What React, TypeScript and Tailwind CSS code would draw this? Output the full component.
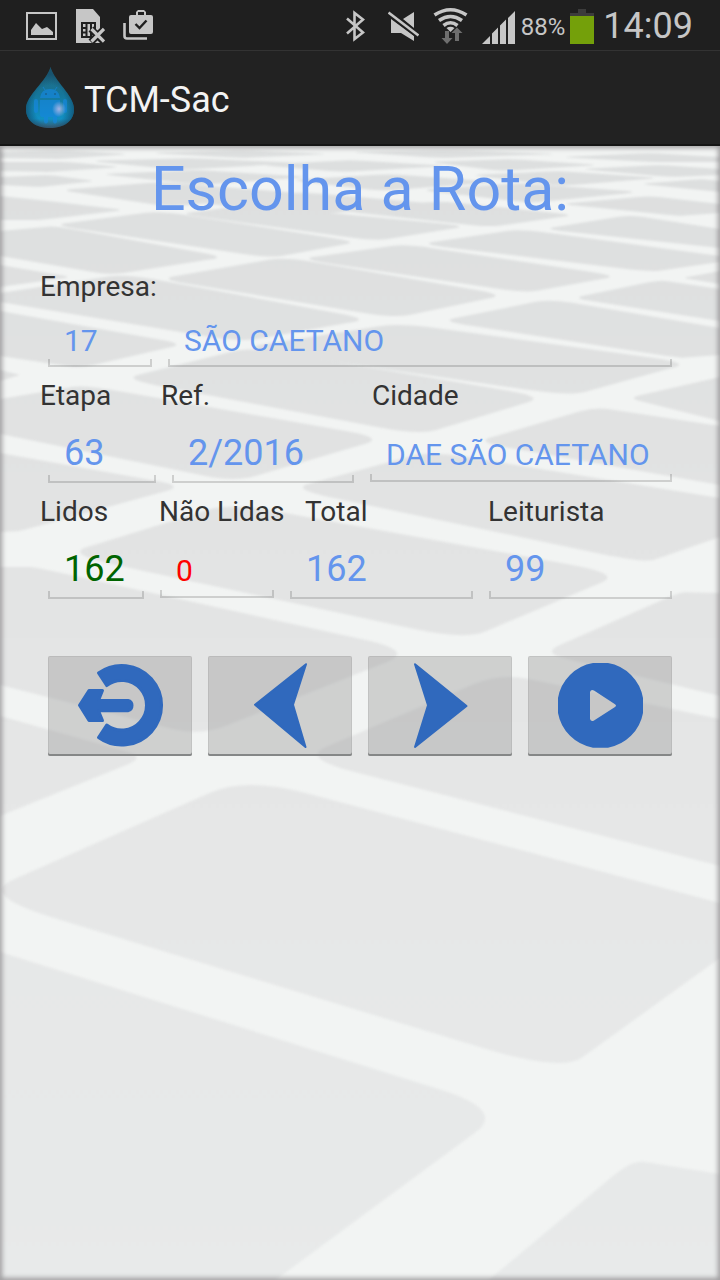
import { useState } from "react";
import type { ReactNode } from "react";

type Point = [number, number];

/* Paving slabs of the backdrop, listed from the horizon to the foreground. */
const SLABS: Point[][] = [
  [[0, 152], [60, 150], [130, 154], [60, 159], [0, 158]],
  [[150, 153], [240, 150], [330, 154], [240, 158]],
  [[350, 152], [450, 150], [560, 154], [440, 158]],
  [[560, 157], [650, 153], [720, 157], [720, 162], [650, 162]],
  [[0, 162], [70, 162], [120, 167], [50, 172], [0, 171]],
  [[90, 161], [190, 158], [300, 163], [180, 170]],
  [[260, 165], [350, 160], [450, 166], [340, 172]],
  [[430, 162], [510, 159], [600, 165], [500, 171]],
  [[580, 169], [660, 165], [720, 169], [720, 175], [670, 177]],
  [[0, 177], [50, 175], [95, 181], [40, 187], [0, 185]],
  [[100, 174], [200, 170], [310, 177], [200, 185]],
  [[290, 180], [390, 174], [500, 182], [380, 191]],
  [[470, 175], [560, 171], [660, 178], [560, 186]],
  [[640, 184], [700, 179], [720, 181], [720, 192]],
  [[60, 190], [160, 182], [300, 193], [170, 207]],
  [[180, 201], [300, 192], [440, 204], [310, 215]],
  [[420, 190], [520, 183], [640, 192], [530, 203]],
  [[560, 204], [650, 196], [720, 204], [720, 213], [680, 216]],
  [[340, 211], [440, 201], [575, 215], [490, 227]],
  [[0, 196], [40, 200], [125, 210], [40, 220], [0, 220]],
  [[180, 214], [245, 205], [468, 226], [376, 241]],
  [[543, 229], [630, 215], [720, 229], [720, 248]],
  [[0, 231], [55, 226], [226, 257], [110, 275], [0, 256]],
  [[52, 225], [160, 211], [358, 242], [270, 258]],
  [[300, 259], [405, 244], [618, 276], [525, 293]],
  [[420, 244], [520, 229], [720, 256], [720, 262], [650, 272]],
  [[683, 278], [720, 271], [720, 284]],
  [[572, 298], [660, 280], [720, 289], [720, 321]],
  [[0, 265], [72, 277], [0, 287]],
  [[158, 279], [285, 257], [505, 295], [395, 318]],
  [[0, 293], [125, 274], [370, 319], [240, 342], [0, 302]],
  [[440, 321], [550, 299], [720, 328], [720, 355], [680, 358]],
  [[0, 311], [185, 344], [80, 368], [0, 356]],
  [[240, 348], [400, 323], [690, 363], [570, 396]],
  [[0, 370], [20, 375], [0, 381]],
  [[122, 379], [250, 347], [545, 397], [420, 435]],
  [[628, 398], [720, 377], [720, 421]],
  [[0, 399], [85, 385], [385, 438], [235, 482], [0, 434]],
  [[475, 442], [595, 407], [720, 426], [720, 485]],
  [[0, 453], [185, 486], [20, 531], [0, 532]],
  [[290, 489], [430, 451], [720, 498], [720, 537], [645, 563]],
  [[65, 554], [230, 503], [622, 574], [465, 640]],
  [[542, 653], [680, 592], [720, 593], [720, 696]],
  [[0, 567], [35, 567], [415, 651], [200, 736], [0, 685]],
  [[300, 758], [500, 673], [720, 719], [720, 866]],
  [[0, 716], [146, 757], [0, 816]],
  [[-22, 895], [246, 777], [720, 903], [720, 958], [562, 1072]],
  [[0, 952], [506, 1110], [270, 1284], [0, 1284]],
  [[484, 1284], [632, 1160], [720, 1174], [720, 1284]],
];

/* Closed outline through the given corners, each corner softened by a curve. */
function slabPath(points: Point[]): string {
  const parts = points.map((p, i) => {
    const prev = points[(i + points.length - 1) % points.length];
    const next = points[(i + 1) % points.length];
    const onEdge = p[0] <= 0 || p[0] >= 720 || p[1] > 1280;
    const t = onEdge && p[0] > -5 ? 0 : 0.13;
    const ax = p[0] + (prev[0] - p[0]) * t;
    const ay = p[1] + (prev[1] - p[1]) * t;
    const bx = p[0] + (next[0] - p[0]) * t;
    const by = p[1] + (next[1] - p[1]) * t;
    return `${i === 0 ? "M" : "L"}${ax} ${ay}Q${p[0]} ${p[1]} ${bx} ${by}`;
  });
  return parts.join("") + "Z";
}

function Backdrop() {
  return (
    <div aria-hidden="true" className="absolute inset-0 overflow-hidden bg-[#f2f4f3]">
      <svg className="h-full w-full blur-[1px]" viewBox="0 146 720 1134" preserveAspectRatio="none">
        <defs>
          <linearGradient id="slab" gradientUnits="userSpaceOnUse" x1="0" y1="146" x2="0" y2="1280">
            <stop offset="0" stopColor="#dddfdf" />
            <stop offset="0.3" stopColor="#e2e3e3" />
            <stop offset="0.6" stopColor="#e6e7e7" />
            <stop offset="1" stopColor="#e8eaea" />
          </linearGradient>
        </defs>
        {SLABS.map((slab, i) => (
          <path key={i} d={slabPath(slab)} fill="url(#slab)" />
        ))}
      </svg>
      <div className="absolute inset-0 shadow-[inset_0_0_5px_2px_rgba(80,75,80,0.5)]" />
    </div>
  );
}

function StatusBar() {
  return (
    <div className="flex h-[51px] items-center justify-between border-b border-[#333] bg-[#1f1f1f] pr-[27px] pl-[26px] text-[#c6c6c6]">
      <div className="flex items-center">
        <svg className="mr-[19px] h-[50px] w-[31px]" viewBox="26 0 31 50" fill="currentColor">
          <path fillRule="evenodd" d="M26 12H57V40H26ZM28 14V38H55V14Z" />
          <path d="M31 35V30L36 23L42 29L47 27L53 32V35Z" />
        </svg>
        <svg className="mr-[18px] h-[50px] w-[29px]" viewBox="76 0 29 50">
          <path fill="currentColor" d="M76 9H93L100 17V43H76Z" />
          <path fill="none" stroke="#1f1f1f" strokeWidth="2" d="M82 23H95V37H82ZM86.500 23V37M91 23V37M82 28H87M82 32.500H87" />
          <path fill="none" stroke="#1f1f1f" strokeWidth="7" d="M91 29L104 42M104 29L91 42" />
          <path fill="none" stroke="currentColor" strokeWidth="3.200" d="M91.500 29L104 41.500M104 29L91.500 41.500" />
        </svg>
        <svg className="h-[50px] w-[31px]" viewBox="123 0 31 50">
          <path fill="currentColor" fillRule="evenodd" d="M131 15H136V12L138 10H144L146 12V15H151Q153 15 153 17V32Q153 34 151 34H131Q129 34 129 32V17Q129 15 131 15ZM138 15H144V12H138Z" />
          <path fill="none" stroke="currentColor" strokeWidth="2.600" d="M124.500 23V36Q124.500 38.500 127 38.500H147" />
          <path fill="none" stroke="#1f1f1f" strokeWidth="2.400" d="M135.500 24L139.500 28L146.500 20.500" />
        </svg>
      </div>
      <div className="flex items-center">
        <svg className="mr-[23px] h-[50px] w-[19px]" viewBox="347 0 19 50" fill="none" stroke="currentColor" strokeWidth="2.600">
          <path d="M348 18.500L364 32.500L355.500 39V13L364 19.500L348 33.500" />
        </svg>
        <svg className="mr-[14px] h-[50px] w-[31px]" viewBox="389 0 31 50">
          <path fill="currentColor" d="M404 19L415 12V28ZM392 19L415 36V41L402 33H392Z" />
          <path stroke="#1f1f1f" strokeWidth="6" d="M389 12L420 36" />
          <path stroke="currentColor" strokeWidth="2.600" d="M389.500 12.500L419.500 35.500" />
        </svg>
        <svg className="mr-[14px] h-[50px] w-[35px]" viewBox="434 0 35 50" fill="none">
          <g stroke="currentColor" strokeWidth="3.600">
            <path d="M435.500 15Q451.500 4.500 467.500 15" />
            <path d="M440 20.500Q451.500 12.500 463 20.500" />
            <path d="M444.500 25.500Q451.500 20 458.500 25.500" />
          </g>
          <path fill="currentColor" d="M447.500 28Q451.500 25.500 455.500 28L451.500 32Z" />
          <path fill="#6e6e6e" d="M446 31H450V38H453.500L448 44L442.500 38H446ZM456 41H460V33H463.500L458 27.500L452.500 33H456Z" />
        </svg>
        <svg className="mr-[5px] h-[50px] w-[34px]" viewBox="483 0 34 50" fill="currentColor">
          <path d="M483 44L491 36V44ZM493 33.500L499 27.500V44H493ZM501 25.500L507 19.500V44H501ZM509 18L516 11V44H509Z" />
        </svg>
        <span className="mr-[5px] pt-1 text-[24px] leading-none">88%</span>
        <svg className="mr-[9px] h-[50px] w-[24px]" viewBox="570 0 24 50">
          <path fill="#3c3c3c" d="M578 9H586V13H594V44H570V13H578Z" />
          <path fill="#74a00a" d="M570 16H594V44H570Z" />
        </svg>
        <time className="pt-[2px] text-[36px] leading-none">14:09</time>
      </div>
    </div>
  );
}

function DropLogo() {
  return (
    <svg className="h-[62px] w-12" viewBox="0 0 48 62" aria-hidden="true">
      <defs>
        <linearGradient id="water" x1="0" y1="0" x2="0" y2="1">
          <stop offset="0" stopColor="#246a80" />
          <stop offset="0.45" stopColor="#15769a" />
          <stop offset="0.85" stopColor="#1190c4" />
          <stop offset="1" stopColor="#39566c" />
        </linearGradient>
        <radialGradient id="shade" cx="0.5" cy="0.62" r="0.5">
          <stop offset="0.65" stopColor="#12425f" stopOpacity="0" />
          <stop offset="1" stopColor="#12425f" stopOpacity="0.6" />
        </radialGradient>
        <radialGradient id="glint">
          <stop offset="0" stopColor="#b3b8e6" stopOpacity="0.9" />
          <stop offset="1" stopColor="#b3b8e6" stopOpacity="0" />
        </radialGradient>
      </defs>
      <path fill="url(#water)" d="M24.500 0C28 14 48 28 48 42C48 54 38 61 24 61C10 61 0 54 0 42C0 28 21 14 24.500 0Z" />
      <path fill="url(#shade)" d="M24.500 0C28 14 48 28 48 42C48 54 38 61 24 61C10 61 0 54 0 42C0 28 21 14 24.500 0Z" />
      <g fill="#1687dc" opacity="0.7">
        <path d="M14 31Q15 22 24 22Q33 22 34 31ZM14 33H34V48Q34 50 32 50H31V55Q29 58 27 55V50H22V55Q20 58 18 55V50H16Q14 50 14 48Z" />
        <rect x="8" y="32" width="4" height="14" rx="2" />
        <rect x="37" y="32" width="4" height="14" rx="2" />
        <path fill="none" stroke="#1687dc" d="M19 23L17 20M29 23L31 20" />
      </g>
      <path fill="#176aa0" d="M19 26H21V28H19ZM28 26H30V28H28Z" />
      <ellipse cx="33" cy="42" rx="7" ry="8" fill="url(#glint)" />
    </svg>
  );
}

interface FieldProps {
  id: string;
  initial: string;
  small?: boolean;
  tone?: string;
  name?: string;
}

function Field({ id, initial, small = false, tone = "text-[#6495ed]", name }: FieldProps) {
  const [value, setValue] = useState(initial);
  return (
    <div className="mx-2 min-w-0">
      <input
        id={id}
        aria-label={name}
        value={value}
        onChange={(e) => setValue(e.target.value)}
        className={`block w-full bg-transparent px-4 outline-none ${small ? "h-[38px] text-[30px]" : "h-[44px] text-[36px]"} ${tone}`}
      />
      <div className="h-2 border-x-2 border-b-2 border-black/15" />
    </div>
  );
}

function IconButton({ label, children }: { label: string; children: ReactNode }) {
  return (
    <button
      type="button"
      aria-label={label}
      className="flex h-[100px] items-center justify-center rounded-[2px] bg-[#a0a0a0]/43 shadow-[inset_0_-2px_0_#858787,inset_0_0_0_1px_rgba(0,0,0,0.06)]"
    >
      <svg className="h-[100px] w-36" viewBox="0 0 144 100" fill="#3069bd" stroke="#3069bd" strokeLinejoin="round">
        {children}
      </svg>
    </button>
  );
}

const labelText = "text-[28px] leading-[33px] text-[#333]";

export default function App() {
  return (
    <div className="flex min-h-screen flex-col bg-[#222] font-[Roboto,'Noto_Sans',sans-serif]">
      <StatusBar />
      <header className="flex h-[95px] items-center gap-[10px] border-b-2 border-[#151515] pl-[26px]">
        <DropLogo />
        <span className="pt-1 text-[36px] leading-[42px] text-[#f3f3f3]">TCM-Sac</span>
      </header>
      <main className="relative flex-1">
        <Backdrop />
        <form className="relative px-10 pt-2 pb-12" onSubmit={(e) => e.preventDefault()}>
          <h1 className="text-center text-[61px] leading-[70px] whitespace-nowrap text-[#6495ed]">Escolha a Rota:</h1>

          <label htmlFor="empresa" className={`mt-[46px] block ${labelText}`}>
            Empresa:
          </label>
          <div className="mt-[18px] grid grid-cols-[120fr_520fr] items-baseline">
            <Field id="empresa" initial="17" small />
            <Field id="empresa-nome" name="Nome da empresa" initial="SÃO CAETANO" small />
          </div>

          <div className={`mt-3 grid grid-cols-[121fr_211fr_308fr] ${labelText}`}>
            <label htmlFor="etapa">Etapa</label>
            <label htmlFor="ref">Ref.</label>
            <label htmlFor="cidade">Cidade</label>
          </div>
          <div className="mt-[19px] grid grid-cols-[124fr_198fr_318fr] items-baseline">
            <Field id="etapa" initial="63" />
            <Field id="ref" initial="2/2016" />
            <Field id="cidade" initial="DAE SÃO CAETANO" small />
          </div>

          <div className={`mt-3 grid grid-cols-[119fr_146fr_183fr_192fr] whitespace-nowrap ${labelText}`}>
            <label htmlFor="lidos">Lidos</label>
            <label htmlFor="nao-lidas">Não Lidas</label>
            <label htmlFor="total">Total</label>
            <label htmlFor="leiturista">Leiturista</label>
          </div>
          <div className="mt-[19px] grid grid-cols-[112fr_130fr_199fr_199fr] items-baseline">
            <Field id="lidos" initial="162" tone="text-[#006400]" />
            <Field id="nao-lidas" initial="0" small tone="text-[#ff0000]" />
            <Field id="total" initial="162" />
            <Field id="leiturista" initial="99" />
          </div>

          <div className="mx-2 mt-[57px] grid grid-cols-4 gap-4">
            <IconButton label="Sair">
              <path strokeWidth="3" d="M50.500 17A39.800 39.800 0 1 1 50.500 81.600L58.700 69.050A24.800 24.800 0 1 0 58.700 29.550Z" />
              <path strokeWidth="3" d="M31.500 49.300L41 34.500H54.500L50.500 44.500H80Q84 45.500 84 49.300Q84 54 80 54.700H50.500L54.500 64.500H41Z" />
            </IconButton>
            <IconButton label="Anterior">
              <path strokeWidth="2" d="M98 8.300L47 48.700L97.500 91L85 48.700Z" />
            </IconButton>
            <IconButton label="Próximo">
              <path strokeWidth="2" d="M47 8.300L98.500 50L47 91L60 49.300Z" />
            </IconButton>
            <IconButton label="Iniciar">
              <path stroke="none" fillRule="evenodd" d="M65 7H80A43 43 0 0 1 115 42V57A43 43 0 0 1 80 91.700H65A43 43 0 0 1 30 57V42A43 43 0 0 1 65 7ZM62 36V63Q63 66 66 64.500L87 51Q89 49.700 87 48.300L66 34.500Q63 33 62 36Z" />
            </IconButton>
          </div>
        </form>
      </main>
    </div>
  );
}
